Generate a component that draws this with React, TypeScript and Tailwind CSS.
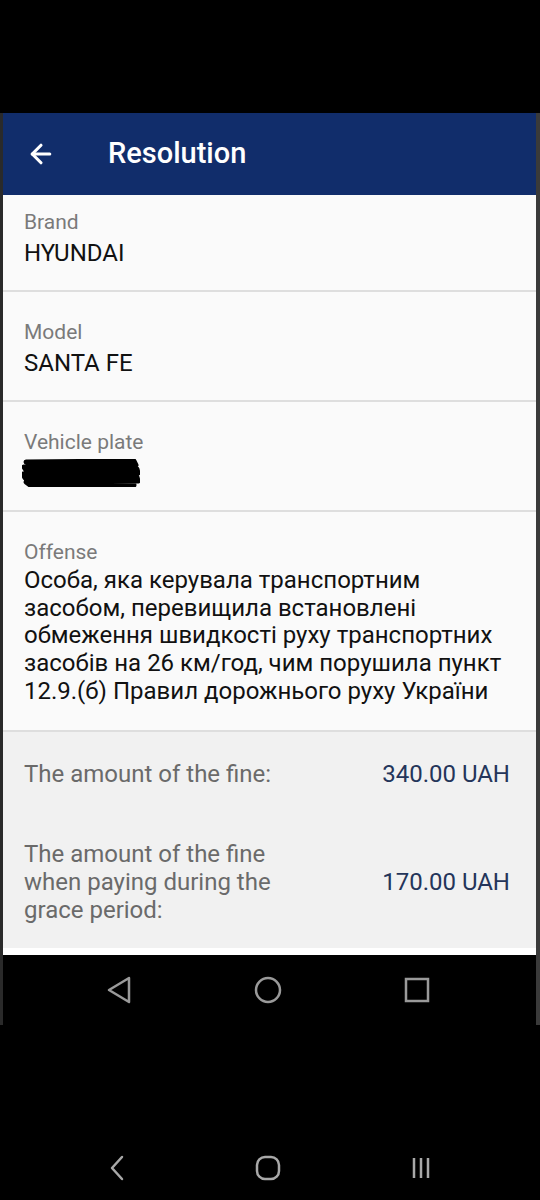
import { ArrowLeft } from "lucide-react";

const Field = ({ label, children, first }: { label: string; children: React.ReactNode; first?: boolean }) => {
  return (
    <div
      className={`flex flex-col px-[21px] pb-[23px] border-b-2 border-[#dedede] ${first ? "pt-[15px]" : "pt-[28px]"}`}
    >
      <div className="text-[21px] leading-[24px] text-[#7a7a7a]">{label}</div>
      <div className="mt-[5px] text-[24px] leading-[28px] text-[#111]">{children}</div>
    </div>
  );
};

const Plate = () => (
  <svg width="118" height="28" viewBox="0 0 118 28" className="-ml-[2px]">
    <path
      d="M4 3 L112 2 L114 6 L2 8 L4 11 L115 10 L116 14 L1 15 L3 19 L115 18 L116 22 L4 23 L8 26 L112 26"
      stroke="#000"
      strokeWidth="5"
      fill="none"
      strokeLinejoin="round"
      strokeLinecap="round"
    />
    <rect x="6" y="4" width="104" height="20" fill="#000" />
  </svg>
);

const App = () => {
  return (
    <div className="w-[540px] h-[1200px] bg-black flex flex-col" style={{ fontFamily: "Roboto, 'Noto Sans', sans-serif" }}>
      <div className="h-[113px]" />
      <div className="flex flex-col border-l-[3px] border-r-[4px] border-l-[#2a2a2a] border-r-[#3a3a3a]">
        <div className="h-[82px] bg-[#112d6b] flex items-center">
          <ArrowLeft size={30} strokeWidth={2.5} className="text-white ml-[23px]" />
          <div className="ml-[52px] text-[29px] font-medium text-white">Resolution</div>
        </div>
        <div className="bg-[#fafafa] flex flex-col">
          <Field label="Brand" first>
            HYUNDAI
          </Field>
          <Field label="Model">SANTA FE</Field>
          <Field label="Vehicle plate">
            <Plate />
          </Field>
          <div className="flex flex-col px-[21px] pt-[28px] pb-[24px] border-b-2 border-[#dedede]">
            <div className="text-[21px] leading-[24px] text-[#7a7a7a]">Offense</div>
            <div className="mt-[3px] text-[24px] leading-[27.7px] text-[#111]">
              Особа, яка керувала транспортним засобом, перевищила встановлені обмеження швидкості руху транспортних
              засобів на 26 км/год, чим порушила пункт 12.9.(б) Правил дорожнього руху України
            </div>
          </div>
        </div>
        <div className="bg-[#f1f1f1] flex flex-col px-[21px] pt-[28px] pb-[24px] gap-[52px]">
          <div className="flex items-center justify-between text-[24px] leading-[28px]">
            <div className="text-[#6a6a6a]">The amount of the fine:</div>
            <div className="text-[#24355a] pr-[5px]">340.00 UAH</div>
          </div>
          <div className="flex items-center justify-between text-[24px] leading-[28px]">
            <div className="text-[#6a6a6a] w-[275px]">The amount of the fine when paying during the grace period:</div>
            <div className="text-[#24355a] pr-[5px]">170.00 UAH</div>
          </div>
        </div>
        <div className="h-[7px] bg-white" />
        <div className="h-[70px] bg-black flex items-center justify-center gap-[120px] pr-[4px]">
          <svg width="28" height="30" viewBox="0 0 28 30">
            <path d="M24 3 L4 15 L24 27 Z" fill="none" stroke="#9a9a9a" strokeWidth="2.5" strokeLinejoin="round" />
          </svg>
          <svg width="30" height="30" viewBox="0 0 30 30">
            <circle cx="15" cy="15" r="12" fill="none" stroke="#9a9a9a" strokeWidth="2.5" />
          </svg>
          <svg width="28" height="28" viewBox="0 0 28 28">
            <rect x="3" y="3" width="22" height="22" fill="none" stroke="#9a9a9a" strokeWidth="2.5" />
          </svg>
        </div>
      </div>
      <div className="flex-1 flex items-end pb-[5px]">
        <div className="w-full h-[55px] flex items-center justify-center gap-[127px]">
          <svg width="20" height="28" viewBox="0 0 20 28">
            <path d="M15 3 L5 14 L15 25" fill="none" stroke="#a8a8a8" strokeWidth="2.5" strokeLinecap="round" strokeLinejoin="round" />
          </svg>
          <svg width="28" height="28" viewBox="0 0 28 28">
            <rect x="3" y="3" width="22" height="22" rx="8" fill="none" stroke="#a8a8a8" strokeWidth="2.5" />
          </svg>
          <svg width="24" height="28" viewBox="0 0 24 28">
            <path d="M5 4 V24 M12 4 V24 M19 4 V24" stroke="#a8a8a8" strokeWidth="2.5" />
          </svg>
        </div>
      </div>
    </div>
  );
};

export default App;
